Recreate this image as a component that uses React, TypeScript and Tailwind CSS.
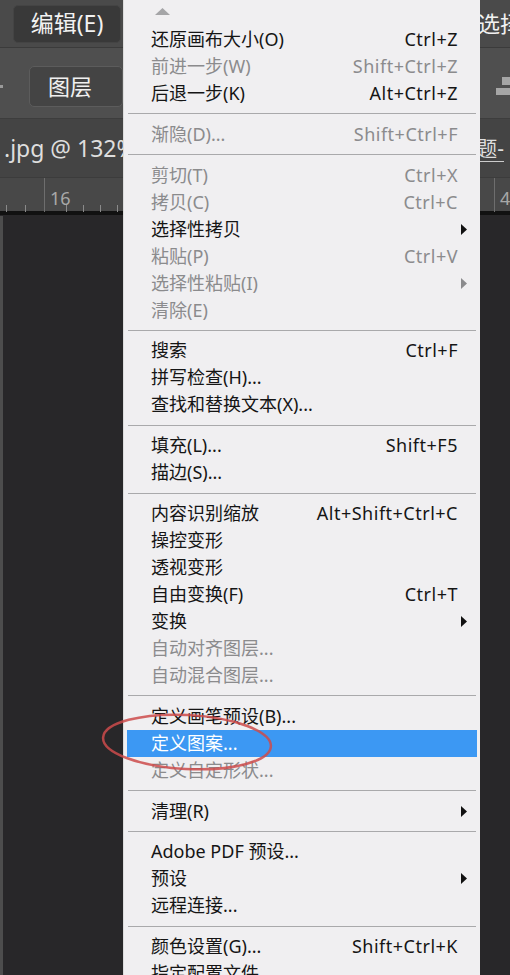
import React from 'react'

type Item =
    | { kind: 'sep' }
    | { kind: 'row'; label: string; keys?: string; off?: boolean; sub?: boolean; active?: boolean }

const items: Item[] = [
    { kind: 'row', label: '还原画布大小(O)', keys: 'Ctrl+Z' },
    { kind: 'row', label: '前进一步(W)', keys: 'Shift+Ctrl+Z', off: true },
    { kind: 'row', label: '后退一步(K)', keys: 'Alt+Ctrl+Z' },
    { kind: 'sep' },
    { kind: 'row', label: '渐隐(D)...', keys: 'Shift+Ctrl+F', off: true },
    { kind: 'sep' },
    { kind: 'row', label: '剪切(T)', keys: 'Ctrl+X', off: true },
    { kind: 'row', label: '拷贝(C)', keys: 'Ctrl+C', off: true },
    { kind: 'row', label: '选择性拷贝', sub: true },
    { kind: 'row', label: '粘贴(P)', keys: 'Ctrl+V', off: true },
    { kind: 'row', label: '选择性粘贴(I)', sub: true, off: true },
    { kind: 'row', label: '清除(E)', off: true },
    { kind: 'sep' },
    { kind: 'row', label: '搜索', keys: 'Ctrl+F' },
    { kind: 'row', label: '拼写检查(H)...' },
    { kind: 'row', label: '查找和替换文本(X)...' },
    { kind: 'sep' },
    { kind: 'row', label: '填充(L)...', keys: 'Shift+F5' },
    { kind: 'row', label: '描边(S)...' },
    { kind: 'sep' },
    { kind: 'row', label: '内容识别缩放', keys: 'Alt+Shift+Ctrl+C' },
    { kind: 'row', label: '操控变形' },
    { kind: 'row', label: '透视变形' },
    { kind: 'row', label: '自由变换(F)', keys: 'Ctrl+T' },
    { kind: 'row', label: '变换', sub: true },
    { kind: 'row', label: '自动对齐图层...', off: true },
    { kind: 'row', label: '自动混合图层...', off: true },
    { kind: 'sep' },
    { kind: 'row', label: '定义画笔预设(B)...' },
    { kind: 'row', label: '定义图案...', active: true },
    { kind: 'row', label: '定义自定形状...', off: true },
    { kind: 'sep' },
    { kind: 'row', label: '清理(R)', sub: true },
    { kind: 'sep' },
    { kind: 'row', label: 'Adobe PDF 预设...' },
    { kind: 'row', label: '预设', sub: true },
    { kind: 'row', label: '远程连接...' },
    { kind: 'sep' },
    { kind: 'row', label: '颜色设置(G)...', keys: 'Shift+Ctrl+K' },
    { kind: 'row', label: '指定配置文件...' },
]

function MenuRow({ item }: { item: Item }) {
    if (item.kind === 'sep') {
        return (
            <div className="h-[13.8px] shrink-0 flex items-center px-[4px]">
                <div className="h-px w-full bg-[#a9a9ab]" />
            </div>
        )
    }

    const color = item.active ? 'text-white' : item.off ? 'text-[#8b8b8d]' : 'text-[#151515]'

    return (
        <div className={`h-[27px] shrink-0 flex items-center pl-[24px] pr-[13px] mx-[3px] ${item.active ? 'bg-[#3c98f3]' : ''} ${color}`}>
            <span className="flex-1 whitespace-nowrap">{item.label}</span>
            {item.keys && <span className="whitespace-nowrap tracking-[0.5px] pr-[6px]">{item.keys}</span>}
            {item.sub && (
                <svg width="6" height="11" viewBox="0 0 6 11" className="-mr-[3px] ml-[3px]">
                    <path d="M0 0 L6 5.5 L0 11 Z" fill={item.off ? '#8b8b8d' : '#111'} />
                </svg>
            )}
        </div>
    )
}

export default function App() {
    return (
        <div
            className="relative w-[510px] h-[975px] overflow-hidden bg-[#282729] text-[#e6e6e6]"
            style={{ fontFamily: '"Noto Sans", "Noto Sans CJK SC", sans-serif' }}
        >
            {/* menu bar */}
            <div className="h-[48px] bg-[#4a4a4a] border-b border-[#3b3b3b] flex items-center justify-between pl-[13px] overflow-hidden">
                <div className="h-[38px] w-[108px] rounded-[5px] bg-[#393939] border border-[#444] flex items-center justify-center text-[23px] text-[#f2f2f2]">
                    编辑(E)
                </div>
                <span className="text-[22px] text-[#f2f2f2] w-[32px] overflow-hidden whitespace-nowrap">选择</span>
            </div>

            {/* options bar */}
            <div className="h-[71px] bg-[#4f4f4f] border-b border-[#3d3d3d] flex items-center justify-between pt-[6px]">
                <div className="flex items-center">
                    <span className="w-[3px] h-[3px] bg-[#9a9a9a]" />
                    <div className="ml-[26px] h-[41px] w-[94px] rounded-[5px] bg-[#444] border border-[#5c5c5c] flex items-center pl-[18px] text-[22px] text-[#f0f0f0]">
                        图层
                    </div>
                </div>
                <div className="flex flex-col gap-[3px] items-end">
                    <span className="w-[8px] h-[8px] bg-[#a6a6a6]" />
                    <span className="w-[14px] h-[7px] bg-[#a6a6a6]" />
                </div>
            </div>

            {/* document tab */}
            <div className="h-[58px] bg-[#444] flex items-center justify-between pl-[4px] text-[23px] text-[#dedede]">
                <span className="whitespace-nowrap">.jpg @ 132%</span>
                <span className="whitespace-nowrap mr-[6px] border-b border-[#ccc] leading-[26px] text-[21px]">题-</span>
            </div>

            {/* ruler */}
            <div className="relative h-[34px] bg-[#484848] border-t border-[#3c3c3c]">
                <svg width="510" height="34" className="absolute inset-0">
                    <line x1="44.5" y1="0" x2="44.5" y2="34" stroke="#6e6e6e" />
                    <line x1="494.5" y1="0" x2="494.5" y2="34" stroke="#6e6e6e" />
                    {[6, 25, 66, 83, 100, 117].map(x => (
                        <line key={x} x1={x + 0.5} y1="27" x2={x + 0.5} y2="34" stroke="#8a8a8a" />
                    ))}
                    <text x="50" y="27" fontSize="18" fill="#a8a8a8" fontFamily="Noto Sans, sans-serif">16</text>
                    <text x="500" y="27" fontSize="18" fill="#a8a8a8" fontFamily="Noto Sans, sans-serif">4</text>
                </svg>
            </div>
            <div className="h-[4px] bg-[#111]" />

            {/* canvas area edge */}
            <div className="absolute left-0 top-[216px] bottom-0 w-[3px] bg-[#4d4d4d]" />

            {/* edit dropdown */}
            <div className="absolute left-[123px] top-0 w-[357px] h-[975px] bg-[#f0eff1] border-l border-[#dcdcdc] flex flex-col text-[18px]">
                <div className="h-[26px] shrink-0 pl-[31px] pt-[8px]">
                    <svg width="15" height="7" viewBox="0 0 15 7">
                        <path d="M0 7 L7.5 0 L15 7 Z" fill="#a5a5a7" />
                    </svg>
                </div>
                {items.map((item, i) => (
                    <MenuRow key={'menu-' + i} item={item} />
                ))}
            </div>

            {/* red hand-drawn circle */}
            <svg width="510" height="975" className="absolute inset-0 pointer-events-none">
                <ellipse cx="187" cy="742" rx="84" ry="27" fill="none" stroke="#cd4b4b" strokeWidth="2.5" opacity="0.85" transform="rotate(3 187 742)" />
            </svg>
        </div>
    )
}
